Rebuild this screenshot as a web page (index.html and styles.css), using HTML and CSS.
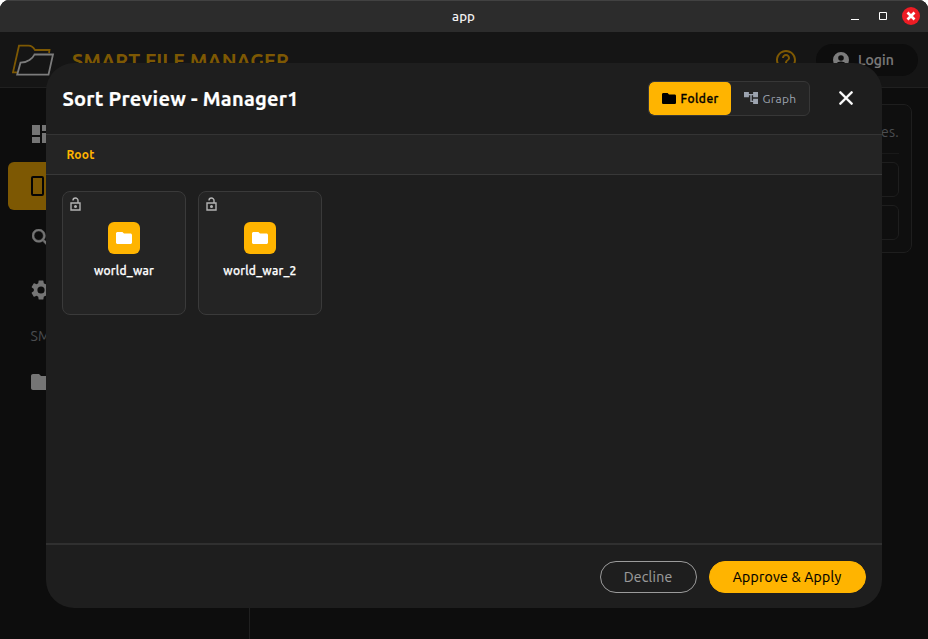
FILE: index.html
```html
<!DOCTYPE html>
<html lang="en">
<head>
<meta charset="utf-8">
<title>app</title>
<link rel="stylesheet" href="styles.css">
</head>
<body>
<div class="window">
  <div class="titlebar">
    <span class="window-title">app</span>
    <div class="window-controls">
      <svg width="10" height="10" viewBox="0 0 10 10"><path d="M1 8.500h8" stroke="#fff"/></svg>
      <svg width="10" height="10" viewBox="0 0 10 10"><path d="M1.500 1.500h7v7h-7z" fill="none" stroke="#fff"/></svg>
      <svg width="18" height="18" viewBox="0 0 18 18"><circle cx="9" cy="9" r="9" fill="#ed1c24"/><path d="M5.500 5.500l7 7m0-7l-7 7" stroke="#fff" stroke-width="2.700"/></svg>
    </div>
  </div>
  <div class="app">
    <header class="header">
      <svg class="logo" width="44" height="36" viewBox="0 0 44 36" fill="none" stroke-width="1.800"><path d="M6 30.300H2L8 3.700H17.500Q21.500 3.700 24 8H38.500L38 11" stroke="#7d5803"/><path d="M23.500 12.500H42L37.500 32.700H6.200L9.500 20.700Q15 20.500 18.500 18Q22.500 15 23.500 12.500Z" stroke="#7c7c7c"/></svg>
      <span class="brand">SMART FILE MANAGER</span>
      <svg class="help" width="24" height="24" viewBox="0 0 24 24" fill="#7d5803"><path d="M11 18h2v-2h-2v2zm1-16C6.480 2 2 6.480 2 12s4.480 10 10 10 10-4.480 10-10S17.520 2 12 2zm0 18c-4.410 0-8-3.590-8-8s3.590-8 8-8 8 3.590 8 8-3.590 8-8 8zm0-14c-2.210 0-4 1.790-4 4h2c0-1.100.9-2 2-2s2 .9 2 2c0 2-3 1.750-3 5h2c0-2.250 3-2.500 3-5 0-2.210-1.790-4-4-4z"/></svg>
      <div class="login">
        <svg width="16" height="16" viewBox="2 2 20 20" fill="#7c7c7c"><path d="M12 2a10 10 0 1 0 0 20 10 10 0 0 0 0-20zm0 4a3.500 3.500 0 1 1 0 7 3.500 3.500 0 0 1 0-7zm0 14c-2.500 0-4.700-1.200-6-3 1-2 4-3 6-3s5 1 6 3c-1.300 1.800-3.500 3-6 3z"/></svg>
        <span>Login</span>
      </div>
    </header>
    <div class="main">
      <nav class="sidebar">
        <div class="nav-item"><svg width="18" height="18" viewBox="3 3 18 18"><path d="M3 13h8V3H3v10zm0 8h8v-6H3v6zm10 0h8V11h-8v10zm0-18v6h8V3h-8z"/></svg></div>
        <div class="nav-item active"><svg width="28" height="20" viewBox="0 0 28 20" fill="none" stroke="#050505" stroke-width="2"><rect x="1" y="1" width="11" height="18" rx="1"/><rect x="16" y="1" width="11" height="18" rx="1"/></svg></div>
        <div class="nav-item"><svg width="18" height="18" viewBox="3 3 17.500 17.500" stroke="#757575" stroke-width=".5"><path d="M15.500 14h-.79l-.28-.27A6.470 6.470 0 0 0 16 9.500 6.500 6.500 0 1 0 9.500 16c1.610 0 3.090-.59 4.230-1.570l.27.28v.79l5 4.990L20.490 19l-4.990-5zm-6 0C7.010 14 5 11.990 5 9.500S7.010 5 9.500 5 14 7.010 14 9.500 11.990 14 9.500 14z"/></svg></div>
        <div class="nav-item gear"><svg width="20" height="20" viewBox="2 2 20 20"><path d="M19.140 12.940c.04-.3.060-.61.060-.94 0-.32-.02-.64-.07-.94l2.030-1.580a.49.49 0 0 0 .12-.61l-1.920-3.320a.49.49 0 0 0-.59-.22l-2.390.96c-.5-.38-1.030-.7-1.620-.94l-.36-2.540a.48.48 0 0 0-.48-.41h-3.840c-.24 0-.43.17-.47.41l-.36 2.540c-.59.24-1.130.57-1.620.94l-2.390-.96a.48.48 0 0 0-.59.22L2.740 8.870c-.12.21-.08.47.12.61l2.030 1.580c-.05.3-.09.63-.09.94s.02.64.07.94l-2.030 1.580a.49.49 0 0 0-.12.61l1.920 3.320c.12.22.37.29.59.22l2.390-.96c.5.38 1.030.7 1.620.94l.36 2.540c.05.24.24.41.48.41h3.840c.24 0 .44-.17.47-.41l.36-2.540c.59-.24 1.130-.56 1.620-.94l2.390.96c.22.08.47 0 .59-.22l1.920-3.320a.49.49 0 0 0-.12-.61l-2.010-1.580zM12 15.600A3.600 3.600 0 1 1 12 8.400a3.600 3.600 0 0 1 0 7.200z"/></svg></div>
        <div class="nav-label">SMART MANAGERS</div>
        <div class="nav-item"><svg width="20" height="16" viewBox="2 4 20 16"><path d="M10 4H4c-1.100 0-2 .9-2 2v12c0 1.100.9 2 2 2h16c1.100 0 2-.9 2-2V8c0-1.100-.9-2-2-2h-8l-2-2z"/></svg></div>
      </nav>
      <section class="content">
        <div class="panel">
          <div class="panel-text">Manage your files.</div>
          <div class="field"></div>
          <div class="field"></div>
        </div>
      </section>
    </div>
    <div class="dialog">
      <div class="dialog-header">
        <h1>Sort Preview - Manager1</h1>
        <div class="toggle">
          <div class="option selected"><svg width="14" height="11" viewBox="2 4 20 16" preserveAspectRatio="none"><path d="M10 4H4c-1.100 0-2 .9-2 2v12c0 1.100.9 2 2 2h16c1.100 0 2-.9 2-2V8c0-1.100-.9-2-2-2h-8l-2-2z"/></svg><span>Folder</span></div>
          <div class="option"><svg width="14" height="12" viewBox="2 3 20 18" preserveAspectRatio="none" fill="#9ca3af"><path d="M22 11V3h-7v3H9V3H2v8h7V8h2v10h4v3h7v-8h-7v3h-2V8h2v3z"/></svg><span>Graph</span></div>
        </div>
        <svg class="close" width="14" height="14" viewBox="5 5 14 14" fill="#fff" stroke="#fff" stroke-width=".4"><path d="M19 6.410L17.590 5 12 10.590 6.410 5 5 6.410 10.590 12 5 17.590 6.410 19 12 13.410 17.590 19 19 17.590 13.410 12z"/></svg>
      </div>
      <div class="breadcrumb"><span>Root</span></div>
      <div class="grid">
        <div class="card">
          <svg class="lock" width="11" height="14" viewBox="0 0 11 14"><path d="M1 6h9v7H1zM3 3.400C3 .3 8 .2 8 3.500V6"/><circle cx="5.500" cy="9.500" r=".8"/></svg>
          <div class="tile"><svg width="16" height="12" viewBox="2 4 20 16" preserveAspectRatio="none" fill="#fff"><path d="M10 4H4c-1.100 0-2 .9-2 2v12c0 1.100.9 2 2 2h16c1.100 0 2-.9 2-2V8c0-1.100-.9-2-2-2h-8l-2-2z"/></svg></div>
          <span class="name">world_war</span>
        </div>
        <div class="card">
          <svg class="lock" width="11" height="14" viewBox="0 0 11 14"><path d="M1 6h9v7H1zM3 3.400C3 .3 8 .2 8 3.500V6"/><circle cx="5.500" cy="9.500" r=".8"/></svg>
          <div class="tile"><svg width="16" height="12" viewBox="2 4 20 16" preserveAspectRatio="none" fill="#fff"><path d="M10 4H4c-1.100 0-2 .9-2 2v12c0 1.100.9 2 2 2h16c1.100 0 2-.9 2-2V8c0-1.100-.9-2-2-2h-8l-2-2z"/></svg></div>
          <span class="name">world_war_2</span>
        </div>
      </div>
      <div class="dialog-footer">
        <button class="btn decline"><span>Decline</span></button>
        <button class="btn approve"><span>Approve &amp; Apply</span></button>
      </div>
    </div>
  </div>
</div>
</body>
</html>
```
FILE: styles.css
```css
* { box-sizing: border-box; }
body { margin: 0; background: #fff; font-family: Ubuntu, "Noto Sans", sans-serif; }
svg { display: block; flex: none; }
span, h1, .panel-text, .nav-label { white-space: nowrap; }
.window { width: 928px; height: 639px; display: flex; flex-direction: column; border-radius: 9px 9px 0 0; overflow: hidden; background: #0d0d0d; }
.titlebar { height: 32px; flex: none; display: grid; grid-template-columns: 1fr auto 1fr; align-items: center; background: #2c2c2c; border-top: 1px solid #424242; color: #f2f2f2; font-size: 13.330px; }
.window-title { grid-column: 2; font-weight: 500; margin-right: 1px; }
.window-controls { display: flex; align-items: center; justify-content: flex-end; gap: 18px; padding-right: 8px; margin-top: -1px; }
.window-controls svg:last-child { margin-left: -4px; }
.app { flex: 1; position: relative; display: flex; flex-direction: column; min-height: 0; }
.header { height: 56px; flex: none; display: flex; align-items: center; background: #151515; border-bottom: 1px solid #202020; padding: 0 10px 0 11px; }
.brand { margin-left: 17px; font-size: 20px; font-weight: 700; color: #7d5803; line-height: 28px; margin-top: 3px; }
.help { margin-left: auto; }
.login { display: flex; align-items: center; gap: 9px; width: 102px; height: 32px; margin-left: 18px; padding-left: 17px; border-radius: 16px; background: #0d0d0d; color: #7c7c7c; font-size: 14px; font-weight: 500; letter-spacing: .1px; -webkit-text-stroke: .2px; }
.main { flex: 1; display: flex; min-height: 0; }
.sidebar { width: 250px; border-right: 1px solid #202020; padding: 22px 8px 0; display: flex; flex-direction: column; }
.nav-item { height: 48px; margin-bottom: 4px; padding-left: 24px; display: flex; align-items: center; border-radius: 6px; fill: #757575; }
.nav-item.active, .nav-item.gear, .nav-label + .nav-item { padding-left: 23px; }
.nav-item.active { background: #7d5803; }
.nav-label { height: 40px; line-height: 36px; padding-left: 22.500px; color: #4b4d50; font-size: 14px; letter-spacing: .25px; }
.content { flex: 1; padding: 16px; }
.panel { height: 149px; border: 1px solid #1e1e1e; border-radius: 8px; background: #0f0f0f; padding: 12px; }
.panel-text { height: 37px; line-height: 31px; text-align: right; color: #4b4d50; font-size: 14px; letter-spacing: .25px; border-bottom: 1px solid #191919; margin-bottom: 8px; }
.field { height: 35px; border: 1px solid #1e1e1e; border-radius: 6px; margin-bottom: 8px; }
.dialog { position: absolute; left: 46.400px; top: 31px; width: 835.200px; height: 545.200px; border-radius: 28px; background: #1e1e1e; display: flex; flex-direction: column; overflow: hidden; }
.dialog-header { height: 71px; flex: none; display: flex; align-items: center; padding: 0 29px 0 16px; }
h1 { margin: 0; color: #fff; font-size: 20px; font-weight: 700; line-height: 28px; letter-spacing: .25px; -webkit-text-stroke: .2px; }
.toggle { margin-left: auto; display: flex; width: 162px; height: 35px; border: 1px solid #373737; border-radius: 6px; background: #242424; overflow: hidden; }
.option { flex: 1; display: flex; align-items: center; gap: 5px; padding-left: 13px; font-size: 12px; letter-spacing: .25px; color: #9ca3af; }
.option svg { margin-top: -1px; }
.option.selected { flex: 0 0 82px; background: #ffb400; color: #000; font-weight: 500; letter-spacing: .45px; border-radius: 5px; -webkit-text-stroke: .3px; }
.close { margin-left: 29px; margin-top: -2px; }
.breadcrumb { height: 41px; flex: none; display: flex; align-items: center; padding-left: 20px; background: #242424; border-top: 1px solid #343434; border-bottom: 1px solid #383838; color: #ffb400; font-size: 12px; font-weight: 700; letter-spacing: .25px; }
.grid { flex: 1; display: flex; align-items: flex-start; gap: 12px; padding: 16px 15.600px; }
.card { position: relative; width: 124px; height: 124px; border: 1px solid #3a3a3a; border-radius: 8px; background: #242424; display: flex; flex-direction: column; align-items: center; padding-top: 30px; }
.lock { position: absolute; left: 7px; top: 5px; fill: none; stroke: #b3b3b3; stroke-width: 1.4; }
.tile { width: 32px; height: 32px; border-radius: 6px; background: #ffb400; display: flex; align-items: center; justify-content: center; }
.name { margin-top: 9px; color: #fff; font-size: 12px; line-height: 16px; font-weight: 500; letter-spacing: .25px; -webkit-text-stroke: .25px; }
.dialog-footer { height: 65px; flex: none; border-top: 2px solid #303030; display: flex; align-items: center; justify-content: flex-end; gap: 12px; padding-right: 16px; }
.btn { height: 32px; border-radius: 16px; border: 1px solid #9b9b9b; padding: 0; font-family: inherit; font-size: 14px; letter-spacing: .25px; display: flex; align-items: center; justify-content: center; -webkit-text-stroke: .15px; }
.decline { width: 97px; background: none; color: #9b9b9b; }
.approve { width: 157px; background: #ffb400; border-color: #ffb400; color: #000; }
```
